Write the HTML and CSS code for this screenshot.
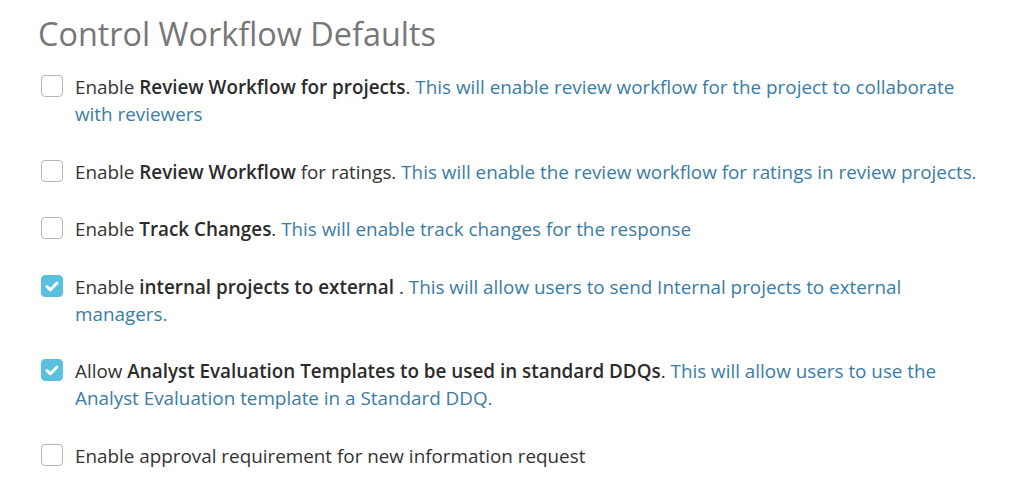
FILE: index.html
```html
<!DOCTYPE html>
<html lang="en">
<head>
    <meta charset="UTF-8">
    <meta name="viewport" content="width=device-width, initial-scale=1.0">
    <title>Control Workflow Defaults</title>
    <link rel="stylesheet" href="styles.css">
</head>
<body>
    <div class="panel">
        <h1 class="title">Control Workflow Defaults</h1>
        <ul class="options">
            <li class="option">
                <span class="box"></span>
                <p class="text">Enable <b>Review Workflow for projects</b>. <span class="desc">This will enable review workflow for the project to collaborate with reviewers</span></p>
            </li>
            <li class="option">
                <span class="box"></span>
                <p class="text">Enable <b>Review Workflow</b> for ratings. <span class="desc">This will enable the review workflow for ratings in review projects.</span></p>
            </li>
            <li class="option">
                <span class="box"></span>
                <p class="text">Enable <b>Track Changes</b>. <span class="desc">This will enable track changes for the response</span></p>
            </li>
            <li class="option">
                <span class="box checked">
                    <svg viewBox="0 0 22 22" width="22" height="22"><path d="M6 11.5l3.4 3.3L16 8" fill="none" stroke="#fff" stroke-width="3" stroke-linecap="round" stroke-linejoin="round"/></svg>
                </span>
                <p class="text">Enable <b>internal projects to external </b>. <span class="desc">This will allow users to send Internal projects to external managers.</span></p>
            </li>
            <li class="option">
                <span class="box checked">
                    <svg viewBox="0 0 22 22" width="22" height="22"><path d="M6 11.5l3.4 3.3L16 8" fill="none" stroke="#fff" stroke-width="3" stroke-linecap="round" stroke-linejoin="round"/></svg>
                </span>
                <p class="text">Allow <b>Analyst Evaluation Templates to be used in standard DDQs</b>. <span class="desc">This will allow users to use the Analyst Evaluation template in a Standard DDQ.</span></p>
            </li>
            <li class="option">
                <span class="box"></span>
                <p class="text">Enable approval requirement for new information request</p>
            </li>
        </ul>
    </div>
</body>
</html>
```

FILE: styles.css
```css
body {
    margin: 0;
    background-color: #fff;
    color: #333;
    font-family: "Open Sans", Arial, sans-serif;
}
.panel {
    padding: 15px 40px 0 38px;
}
.title {
    margin: 0 0 23px 0;
    font-size: 32.4px;
    font-weight: normal;
    line-height: 36px;
    color: #777;
}
.options {
    list-style: none;
    margin: 0;
    padding: 0 0 0 3px;
    display: flex;
    flex-direction: column;
    gap: 30.5px;
}
.option {
    display: flex;
    align-items: flex-start;
    gap: 12px;
    font-size: 18.85px;
    line-height: 27px;
}
.text {
    margin: 0;
}
.box {
    flex: none;
    box-sizing: border-box;
    width: 22px;
    height: 22px;
    margin-top: 1px;
    border: 1px solid #b5b5b5;
    border-radius: 4px;
    background-color: #fff;
}
.box.checked {
    border-color: #5bc0de;
    background-color: #5bc0de;
}
.box svg {
    display: block;
    margin: -1px;
}
.text b {
    font-weight: 600;
    color: #2b2b2b;
}
.desc {
    color: #3a7ca5;
}
```
